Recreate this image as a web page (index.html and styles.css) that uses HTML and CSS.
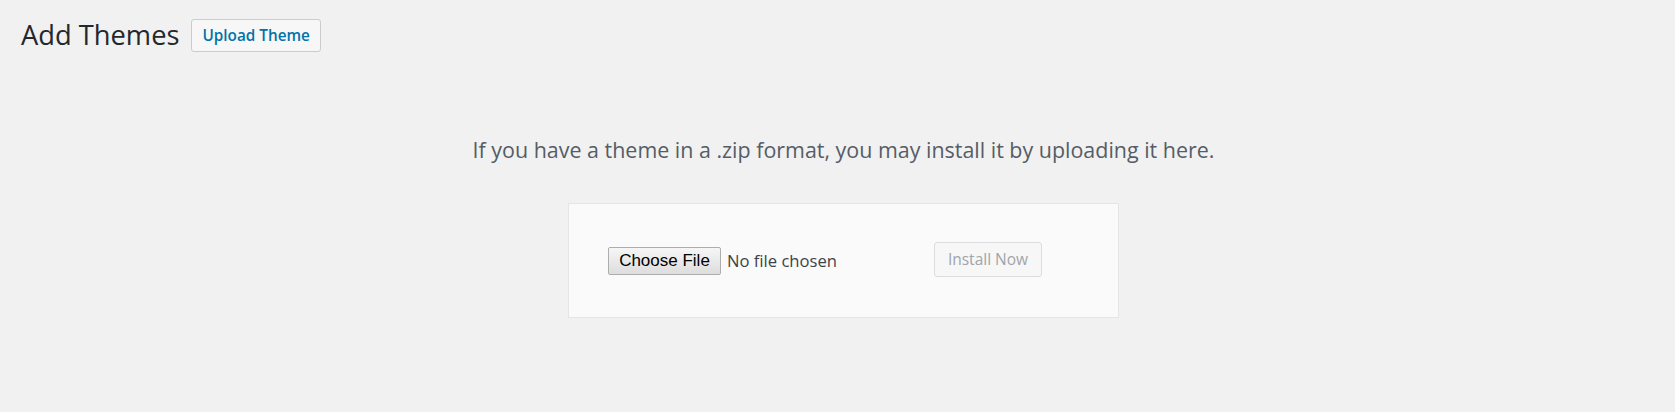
FILE: index.html
```html
<!DOCTYPE html>
<html lang="en">
<head>
<meta charset="utf-8">
<title>Add Themes</title>
<link rel="stylesheet" href="styles.css">
</head>
<body>
<div class="wrap">
  <div class="header">
    <h1 class="page-title">Add Themes</h1>
    <a class="page-title-action" href="#">Upload Theme</a>
  </div>
  <div class="upload-theme">
    <p class="install-help">If you have a theme in a .zip format, you may install it by uploading it here.</p>
    <form class="upload-form">
      <div class="file-input">
        <span class="choose-btn">Choose File</span>
        <span class="no-file">No file chosen</span>
      </div>
      <button type="button" class="install-btn" disabled>Install Now</button>
    </form>
  </div>
</div>
</body>
</html>
```
FILE: styles.css
```css
html, body {
  margin: 0;
  padding: 0;
  background: #f1f1f1;
}
body {
  font-family: "Open Sans", "Noto Sans", sans-serif;
  color: #444;
}
.wrap {
  padding: 16px 9px 0 21px;
}
.header {
  display: flex;
  align-items: center;
  height: 38px;
}
.page-title {
  margin: 0;
  font-size: 27.3px;
  font-weight: 400;
  line-height: 38px;
  color: #23282d;
}
.page-title-action {
  margin-left: 12px;
  box-sizing: border-box;
  height: 33px;
  padding: 0 10px;
  display: flex;
  align-items: center;
  background: #f7f7f7;
  border: 1px solid #ccc;
  border-radius: 3px;
  color: #0073aa;
  font-size: 15.3px;
  font-weight: 600;
  text-decoration: none;
}
.upload-theme {
  display: flex;
  flex-direction: column;
  align-items: center;
}
.install-help {
  margin: 79.1px 0 0;
  font-size: 21.45px;
  line-height: 33.75px;
  color: #555d66;
  text-align: center;
}
.upload-form {
  margin-top: 36.5px;
  box-sizing: border-box;
  width: 551px;
  height: 115px;
  padding-left: 39px;
  display: flex;
  align-items: center;
  background: #fafafa;
  border: 1px solid #e5e5e5;
}
.file-input {
  width: 322px;
  display: flex;
  align-items: center;
}
.choose-btn {
  box-sizing: border-box;
  width: 113px;
  height: 28px;
  display: flex;
  align-items: center;
  justify-content: center;
  font-family: "Liberation Sans", Arial, sans-serif;
  font-size: 17px;
  color: #000;
  background: linear-gradient(#f6f6f6, #dddddd);
  border: 1px solid #adadad;
  border-radius: 2px;
}
.no-file {
  margin-left: 6px;
  font-size: 16.6px;
  color: #3c434a;
}
.install-btn {
  margin-left: 4px;
  box-sizing: border-box;
  width: 108px;
  height: 35px;
  margin-top: -3px;
  font-family: "Open Sans", "Noto Sans", sans-serif;
  font-size: 15.5px;
  color: #a0a5aa;
  background: #f7f7f7;
  border: 1px solid #ddd;
  border-radius: 3px;
  padding: 0;
}
```
